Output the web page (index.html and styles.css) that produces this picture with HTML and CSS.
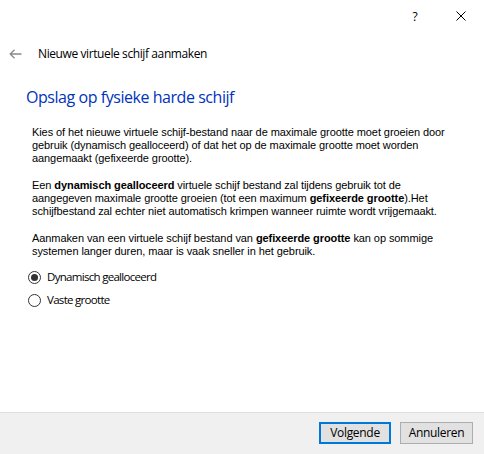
FILE: index.html
```html
<!DOCTYPE html>
<html lang="nl">
<head>
<meta charset="utf-8">
<title>Nieuwe virtuele schijf aanmaken</title>
<link rel="stylesheet" href="styles.css">
</head>
<body>
<div class="dialog">
  <div class="titlebar">
    <span class="cap-btn help">?</span>
    <span class="cap-btn close">
      <svg width="10" height="10" viewBox="0 0 10 10"><path d="M0.5 0.5 L9.5 9.5 M9.5 0.5 L0.5 9.5" stroke="#000" stroke-width="1" fill="none"/></svg>
    </span>
  </div>
  <div class="header">
    <svg class="back" width="13" height="10" viewBox="0 0 13 10"><path d="M1 5 H12.5 M5.5 0.8 L1.2 5 L5.5 9.2" stroke="#8a8a8a" stroke-width="1.3" fill="none"/></svg>
    <span class="wiz-title">Nieuwe virtuele schijf aanmaken</span>
  </div>
  <div class="content">
    <h1 class="heading">Opslag op fysieke harde schijf</h1>
    <p class="para">Kies of het nieuwe virtuele schijf-bestand naar de maximale grootte moet groeien door<br>gebruik (dynamisch gealloceerd) of dat het op de maximale grootte moet worden<br>aangemaakt (gefixeerde grootte).</p>
    <p class="para">Een <b>dynamisch gealloceerd</b> virtuele schijf bestand zal tijdens gebruik tot de<br>aangegeven maximale grootte groeien (tot een maximum <b>gefixeerde grootte</b>).Het<br>schijfbestand zal echter niet automatisch krimpen wanneer ruimte wordt vrijgemaakt.</p>
    <p class="para">Aanmaken van een virtuele schijf bestand van <b>gefixeerde grootte</b> kan op sommige<br>systemen langer duren, maar is vaak sneller in het gebruik.</p>
    <div class="options">
      <label class="radio"><span class="dot checked"></span>Dynamisch gealloceerd</label>
      <label class="radio"><span class="dot"></span>Vaste grootte</label>
    </div>
  </div>
  <div class="footer">
    <button class="btn primary">Volgende</button>
    <button class="btn">Annuleren</button>
  </div>
</div>
</body>
</html>
```
FILE: styles.css
```css
html, body {
  margin: 0;
  padding: 0;
  background: #ffffff;
}
.dialog {
  width: 484px;
  height: 454px;
  display: flex;
  flex-direction: column;
  background: #ffffff;
  font-family: "Open Sans", "Noto Sans", sans-serif;
  color: #000;
}
.titlebar {
  height: 30px;
  display: flex;
  justify-content: flex-end;
}
.cap-btn {
  width: 46px;
  height: 30px;
  display: flex;
  align-items: center;
  justify-content: center;
}
.help {
  font-size: 12px;
  color: #000;
  padding-top: 1px;
}
.close svg {
  display: block;
  margin-top: 1px;
}
.header {
  margin-top: 16px;
  height: 16px;
  display: flex;
  align-items: center;
  padding-left: 9px;
}
.back {
  display: block;
  margin-right: 16px;
}
.wiz-title {
  font-size: 12px;
  line-height: 16px;
  letter-spacing: -0.4px;
  white-space: nowrap;
}
.content {
  flex: 1;
  padding-left: 26px;
}
.heading {
  margin: 24px 0 0 0;
  font-weight: normal;
  font-size: 16px;
  line-height: 22px;
  letter-spacing: -0.45px;
  color: #0033bb;
  white-space: nowrap;
}
.para {
  margin: 18px 0 0 6px;
  font-family: "Liberation Sans", Arial, sans-serif;
  font-size: 11px;
  line-height: 13px;
  letter-spacing: -0.08px;
  white-space: nowrap;
}
.para + .para {
  margin-top: 14px;
}
.options {
  margin: 11px 0 0 2px;
  display: flex;
  flex-direction: column;
  gap: 7px;
}
.radio {
  display: flex;
  align-items: center;
  height: 16px;
  font-size: 11.5px;
  line-height: 16px;
  letter-spacing: -0.7px;
  white-space: nowrap;
}
.dot {
  width: 11px;
  height: 11px;
  border: 1px solid #333;
  border-radius: 50%;
  margin-right: 6px;
  display: flex;
  align-items: center;
  justify-content: center;
  box-sizing: content-box;
}
.dot.checked::after {
  content: "";
  width: 7px;
  height: 7px;
  border-radius: 50%;
  background: #333;
}
.footer {
  height: 42px;
  border-top: 1px solid #dfdfdf;
  background: #f0f0f0;
  display: flex;
  justify-content: flex-end;
  align-items: flex-start;
  padding: 9px 11px 0 0;
  gap: 9px;
  box-sizing: border-box;
}
.btn {
  height: 22px;
  font-family: "Open Sans", "Noto Sans", sans-serif;
  font-size: 12px;
  line-height: 18px;
  letter-spacing: -0.3px;
  background: #e1e1e1;
  border: 1px solid #adadad;
  color: #000;
  padding: 0;
  margin: 0;
  width: 73px;
  box-sizing: border-box;
}
.btn.primary {
  width: 72px;
  border: 2px solid #0078d7;
}
```
